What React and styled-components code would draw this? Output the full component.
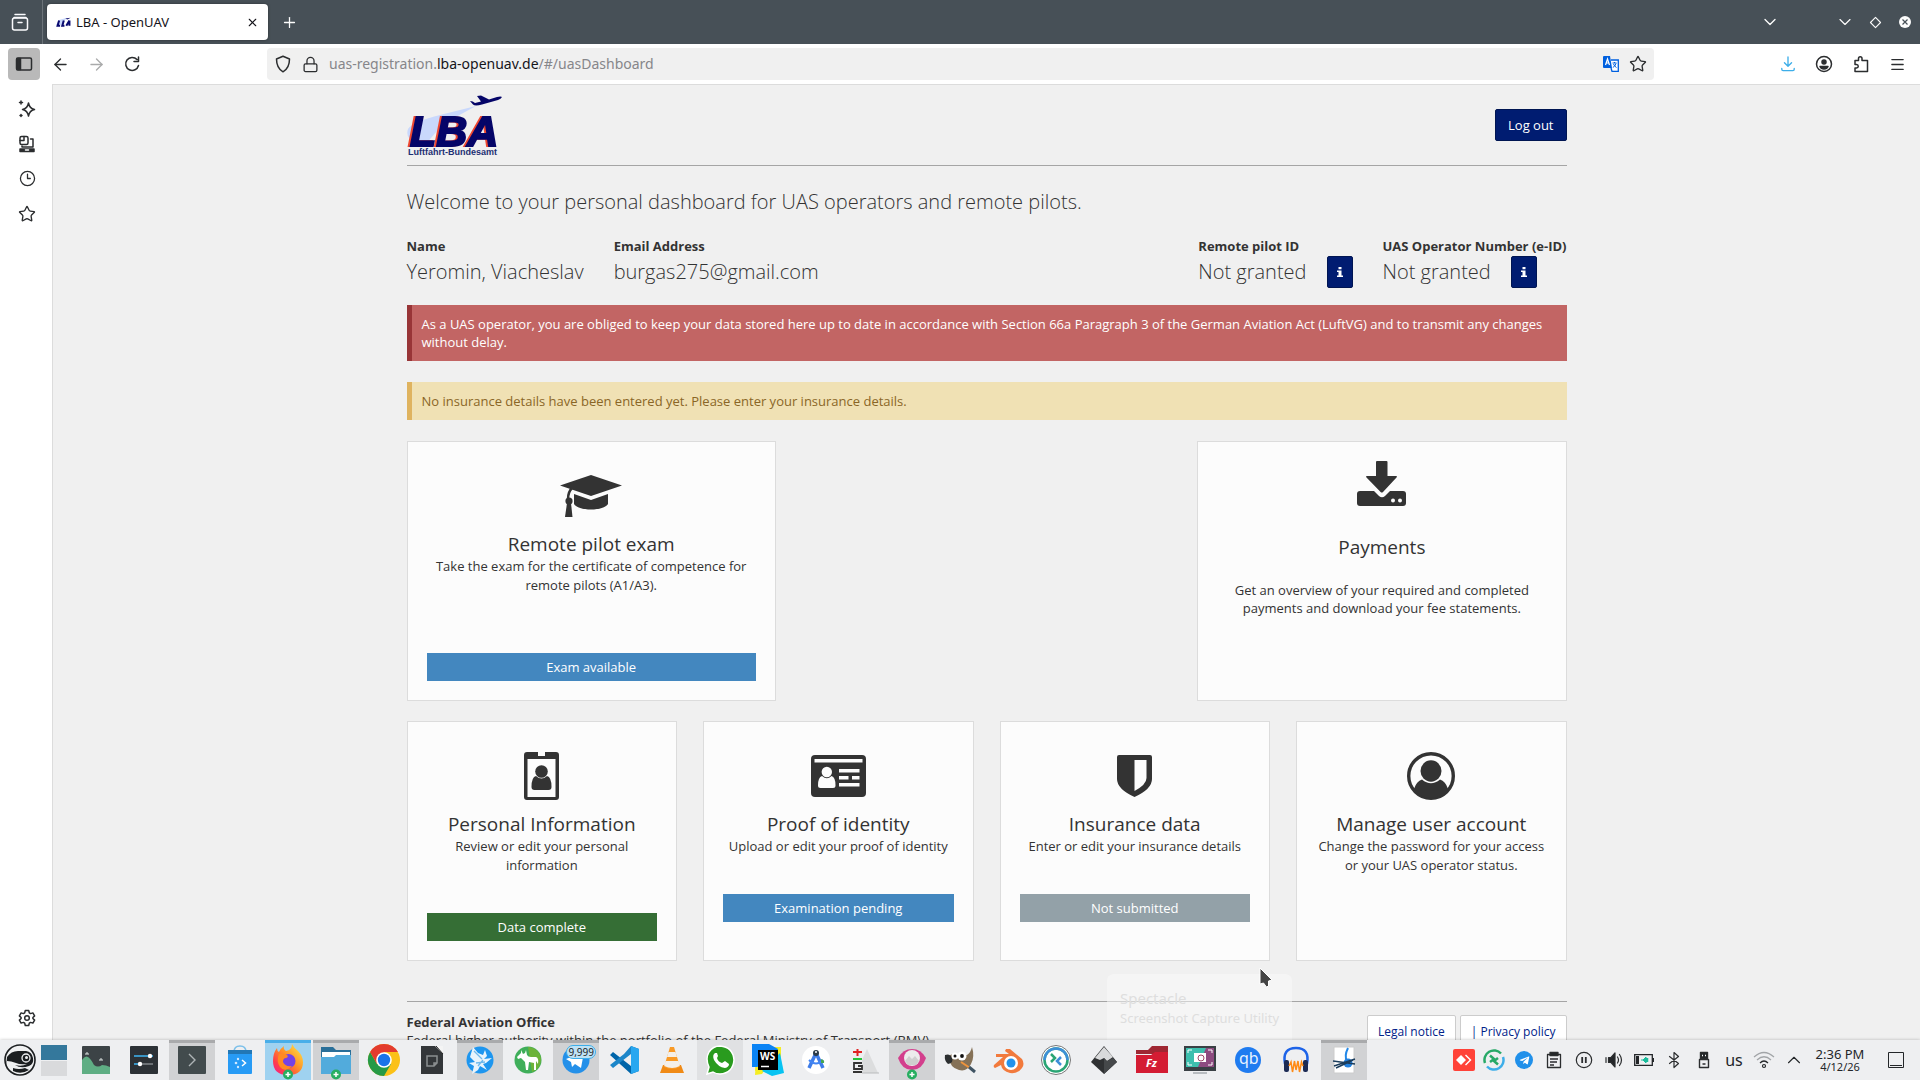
// Library Imports
import React from 'react'
import styled, { createGlobalStyle, css } from 'styled-components'
import {
  ArrowLeft,
  ArrowRight,
  ChevronDown,
  ChevronUp,
  Clock3,
  Lock,
  Menu,
  Plus,
  Star,
  X
} from 'lucide-react'
import { FaTelegramPlane } from 'react-icons/fa'

// Data
const facts = [
  { label: 'Name', value: 'Yeromin, Viacheslav' },
  { label: 'Email Address', value: 'burgas275@gmail.com' }
]

const ids = [
  { label: 'Remote pilot ID', value: 'Not granted' },
  { label: 'UAS Operator Number (e-ID)', value: 'Not granted' }
]

const GlobalStyle = createGlobalStyle`
  * {
    box-sizing: border-box;
  }

  body {
    margin: 0;
    overflow: hidden;
    font-family: 'Open Sans', 'Noto Sans', sans-serif;
    font-size: 13px;
    line-height: 18px;
    color: #333;
  }

  svg {
    display: block;
    flex: none;
  }

  button {
    font: inherit;
    color: inherit;
    border: 0;
    padding: 0;
    background: none;
  }
`

// Card drawings
const CapIcon = () => (
  <svg width="62" height="42" viewBox="0 0 62 42" fill="#333">
    <path d="M0 10.500 31 0l31 10.500L31 21z" />
    <path d="M14 19l17 6 17-6v10c-2 3.500-9 5.500-17 5.500S16 32.500 14 29z" />
    <path d="M12 13c-3 3-4 7-4 11" fill="none" stroke="#333" strokeWidth="2.500" />
    <circle cx="9" cy="26" r="3.600" />
    <path d="M7 28h4l1.500 14h-7.500z" />
  </svg>
)

const DownloadIcon = () => (
  <svg width="49" height="45" viewBox="0 0 49 45" fill="#333">
    <path d="M3 30h43q3 0 3 3v9q0 3-3 3H3q-3 0-3-3v-9q0-3 3-3z" />
    <path d="m16 29 6 6q3 2.500 6 0l6-6z" fill="#fcfcfc" />
    <path d="M19 1q0-1 1-1h9.500q1 0 1 1v14h8.500q2 0 .5 1.500L26 31q-1.200 1-2.400 0L9.500 16.500Q8 15 10 15h9z" />
    <circle cx="36" cy="39.500" r="2" fill="#fcfcfc" />
    <circle cx="43" cy="39.500" r="2" fill="#fcfcfc" />
  </svg>
)

const BadgeIcon = () => (
  <svg width="35" height="48" viewBox="0 0 35 48" fill="#333">
    <path
      fillRule="evenodd"
      d="M3 0h11v4h7V0h11q3 0 3 3v42q0 3-3 3H3q-3 0-3-3V3q0-3 3-3zM3.500 7v38h28V7z"
    />
    <ellipse cx="17.500" cy="19.500" rx="6.300" ry="6.300" />
    <path d="M12 24q5.500 5 11 0 4.500 1 4.500 11 0 3-3 3h-14q-3 0-3-3Q7.500 25 12 24z" />
  </svg>
)

const IdCardIcon = () => (
  <svg width="55" height="42" viewBox="0 0 55 42" fill="#fcfcfc">
    <rect width="55" height="42" rx="4" fill="#333" />
    <path d="M3.500 4h48v3.500h-48zM28 14h20.500v3.500H28zM28 21h9.500v3.500H28zM41 21h7.500v3.500H41zM28 28h20.500v3.500H28z" />
    <circle cx="15.800" cy="17" r="5.200" />
    <path d="M11 21q5 4.500 9.500 0 4 1 4 9.500 0 2.500-2.500 2.500H9.500Q7 33 7 30.500 7 22 11 21z" />
  </svg>
)

const ShieldIcon = () => (
  <svg width="35" height="42" viewBox="0 0 35 42" fill="#333">
    <path
      fillRule="evenodd"
      d="M2 0h31q2 0 2 2v22q0 10-17.500 18Q0 34 0 24V2q0-2 2-2zM17.500 5v31Q29.500 29.500 29.500 23V5z"
    />
  </svg>
)

const AccountIcon = () => (
  <svg width="48" height="48" viewBox="0 0 48 48" fill="#333">
    <circle cx="24" cy="24" r="22.300" fill="none" stroke="#333" strokeWidth="3.400" />
    <ellipse cx="24" cy="19" rx="10.500" ry="10.700" />
    <path d="M15 27.500q9 7.500 18 0 5.500 1.500 8 9.500-7 9-17 9T7 37q2.500-8 8-9.500z" />
  </svg>
)

const LogoLetters = styled.text`
  font: italic 700 43px 'Liberation Sans', sans-serif;
  fill: #050568;
  stroke: #050568;
  stroke-width: 2px;
  filter: drop-shadow(-2px 0 0 #f0472f);
`

const LogoCaption = styled.text`
  font: 700 9px 'Liberation Sans', sans-serif;
  fill: #1d2f73;
`

const LbaLogo = () => (
  <svg width="96" height="62" viewBox="0 0 96 62">
    <path d="M69 11 33 20Q5 27 1 34-2 43 8 47l10 3 18-21z" fill="#c9d8fc" />
    <path
      d="M63 6q3 0 5 2l6-1.500L70 1l4-.5 8 4 8-2.500q4-1 5 0-1 2-4 3L75 9.500q-7 2-9 0z"
      fill="#050568"
    />
    <LogoLetters x="3" y="51">LBA</LogoLetters>
    <LogoCaption x="1" y="60">Luftfahrt-Bundesamt</LogoCaption>
  </svg>
)

const cards = [
  {
    icon: <BadgeIcon />,
    title: 'Personal Information',
    text: 'Review or edit your personal information',
    status: 'Data complete',
    color: '#356e35'
  },
  {
    icon: <IdCardIcon />,
    title: 'Proof of identity',
    text: 'Upload or edit your proof of identity',
    status: 'Examination pending',
    color: '#4387bf'
  },
  {
    icon: <ShieldIcon />,
    title: 'Insurance data',
    text: 'Enter or edit your insurance details',
    status: 'Not submitted',
    color: '#93a1a8'
  },
  {
    icon: <AccountIcon />,
    title: 'Manage user account',
    text: 'Change the password for your access or your UAS operator status.'
  }
]

// Browser drawings
const Line = ({ size = 18, children, ...rest }) => (
  <svg
    width={size}
    height={size}
    viewBox="0 0 18 18"
    fill="none"
    stroke="#2b2d2f"
    strokeWidth="1.500"
    strokeLinecap="round"
    strokeLinejoin="round"
    {...rest}
  >
    {children}
  </svg>
)

const FirefoxViewIcon = () => (
  <Line stroke="#fbfbfe">
    <path d="M4 1.500h10M3 4.500h12" />
    <rect x="1.500" y="5" width="15" height="12" rx="2" />
    <path d="M7 9.500h4" />
  </Line>
)

const SidebarIcon = () => (
  <Line>
    <rect x="1.500" y="3" width="15" height="12" rx="1.500" />
    <path d="M2 3.500h3.500v11H2z" fill="#2b2d2f" />
  </Line>
)

const ReloadIcon = () => (
  <Line>
    <path d="M15.500 10.500A6.500 6.500 0 1 1 14 4.500M15.500 2v4.500H11" />
  </Line>
)

const ShieldLine = () => (
  <Line>
    <path d="M9 1.200 15.500 4c0 5-1.500 10-6.500 12.800C4 14 2.500 9 2.500 4z" />
  </Line>
)

const SparkIcon = () => (
  <Line>
    <path d="M10.500 3q1 5.500 6 6.500-5 1-6 6.500-1-5.500-6-6.500 5-1 6-6.500zM3 1v3M1.500 2.500h3M3 14.500v2M2 15.500h2" />
  </Line>
)

const TabsIcon = () => (
  <Line>
    <rect x="2" y="1.500" width="8" height="8" rx="1.500" />
    <path d="M2 5.500h4v-4M12.500 4H15v8H4V11" />
    <path d="M2 14h14v2.500H2z" fill="#2b2d2f" />
    <path d="M7.500 15h3" stroke="#fff" />
  </Line>
)

const GearIcon = () => (
  <Line>
    <circle cx="9" cy="9" r="2.300" />
    <path d="M7.300 1.500h3.400l.6 2.300 1.300.8 2.300-.7 1.700 3-1.700 1.600v1l1.700 1.600-1.700 3-2.300-.7-1.300.8-.6 2.300H7.300l-.6-2.300-1.300-.8-2.300.7-1.700-3 1.700-1.600v-1L1.400 6.900l1.700-3 2.300.7 1.300-.8z" />
  </Line>
)

const TranslateIcon = () => (
  <svg width="16" height="16" viewBox="0 0 16 16">
    <path d="M8 4h7.300v11.300H9L8 12" fill="#fff" stroke="#0060df" strokeWidth="1.300" />
    <path d="M1 0h6l2 12H1q-1 0-1-1V1q0-1 1-1z" fill="#0060df" />
    <path d="m2.500 9 2-6 2 6M3.300 7h2.500" fill="none" stroke="#fff" strokeWidth="1.200" />
    <path d="M9.500 7h4M11.500 6v1M13 7.500q-1 3-3.200 4M10.500 8q1 2.500 3 3.500" fill="none" stroke="#0060df" />
  </svg>
)

const DownloadLine = () => (
  <Line size={16} stroke="#3daee9">
    <path d="M9 1v10M5 7.500l4 4 4-4M2 14v1q0 1.500 1.500 1.500h11Q16 16.500 16 15v-1" />
  </Line>
)

const ProfileIcon = () => (
  <Line>
    <circle cx="9" cy="9" r="7.500" />
    <circle cx="9" cy="7" r="2" fill="#2b2d2f" />
    <path d="M5 11.500h8q-1 2.500-4 2.500t-4-2.500z" fill="#2b2d2f" />
  </Line>
)

const PuzzleIcon = () => (
  <Line>
    <path d="M3 5.500h3.500V3.500a1.700 1.700 0 0 1 3.500 0v2h5.500V16.500H3v-3.500h1.500a1.700 1.700 0 0 0 0-3.500H3z" />
  </Line>
)

const InfoIcon = () => (
  <svg width="6" height="10" viewBox="0 0 6 10" fill="#fff">
    <path d="M1.500 0h3v2.200h-3zM0 3.500h4.500V8.500H6V10H0V8.500h1.500V5H0z" />
  </svg>
)

const CursorIcon = () => (
  <svg width="14" height="22" viewBox="0 0 14 22">
    <path d="M1 1v16l3.500-1 3 4 2-1v-5l3.500-1z" fill="#444" stroke="#fff" />
  </svg>
)

// Taskbar drawings
const PlusBadge = () => (
  <g>
    <circle cx="16" cy="30.500" r="5" fill="#27ae60" />
    <path d="M16 28v5M13.500 30.500h5" stroke="#fff" strokeWidth="1.500" />
  </g>
)

const art = {
  suse: (
    <>
      <circle cx="16" cy="16" r="15" fill="#eff0f1" stroke="#1b1e20" strokeWidth="1.600" />
      <path d="M3 13q4-6 11-6h8q6 1 7 7 1 6-4 8-8 3-14-1 7 2 12-1-7 1-11-1-5-2-9-2l-1 9Q2 22 3 13z" fill="#1b1e20" />
      <circle cx="22" cy="14" r="4" fill="#1b1e20" stroke="#eff0f1" strokeWidth="1.300" />
      <circle cx="22.500" cy="13.500" r="1.500" fill="#eff0f1" />
      <path d="M9 27q8 4 16-1l-4-2q-6 2-12 0z" fill="#1b1e20" />
    </>
  ),
  monitor: (
    <>
      <rect x="2" y="2" width="28" height="28" rx="1" fill="#3c4346" />
      <path d="M2 16q3-5 6-3t6 8q4 3 8 0 4 0 8 2v7H2z" fill="#5fae84" />
      <path d="M6 11v-2h2v2M20 17v-2h2v2" stroke="#dce3e0" fill="none" />
    </>
  ),
  settings: (
    <>
      <rect x="2" y="2" width="28" height="28" rx="1" fill="#2c3136" />
      <path d="M6 12h19" stroke="#3daee9" strokeWidth="1.600" />
      <path d="M12 20h13" stroke="#7b8186" strokeWidth="1.600" />
      <path d="M6 20h6" stroke="#3daee9" strokeWidth="1.600" />
      <circle cx="22" cy="12" r="2.200" fill="#fff" />
      <circle cx="12" cy="20" r="2.200" fill="#fff" />
    </>
  ),
  terminal: (
    <>
      <rect x="2" y="2" width="28" height="28" rx="1" fill="#424b4d" />
      <path d="m13 10 6 6-6 6" fill="none" stroke="#aeb4b6" strokeWidth="1.400" />
    </>
  ),
  store: (
    <>
      <path d="M10 8q0-6 6-6t6 6" fill="none" stroke="#7cc0ea" strokeWidth="1.500" />
      <path d="M4 6h24v23q0 1-1 1H5q-1 0-1-1z" fill="#279bf5" />
      <path d="M4 6h24v4H4z" fill="#2277b5" />
      <path d="m18 16 3.500 3-3.500 3" fill="none" stroke="#fff" strokeWidth="1.500" />
      <circle cx="12" cy="19" r="1.300" fill="#cfe8ff" />
      <circle cx="14" cy="15" r="1.200" fill="#cfe8ff" />
      <circle cx="14" cy="23" r="1.200" fill="#cfe8ff" />
    </>
  ),
  firefox: (
    <>
      <defs>
        <linearGradient id="fox" x1="1" y1="0" x2="0" y2="1">
          <stop offset="0" stopColor="#fff04f" />
          <stop offset="0.450" stopColor="#ff9326" />
          <stop offset="0.750" stopColor="#ff3d4a" />
          <stop offset="1" stopColor="#f0189c" />
        </linearGradient>
      </defs>
      <path d="M20 0q2 4 6 7 5 5 5 11 0 13-15 13T1 17Q1 9 5 4q0 3 2 4 2-4 5-6-1 3 2 5 6-1 6-7z" fill="url(#fox)" />
      <circle cx="16.500" cy="17" r="7" fill="#7542e5" />
      <path d="M7 10q4-2 8 1 2 2-1 3-3 0-3 4 2 5 9 4-7 7-12 1-4-6-1-13z" fill="#ff8a22" />
      <PlusBadge />
    </>
  ),
  folder: (
    <>
      <path d="M1 3h12l3 3h15v8H1z" fill="#2a6f99" />
      <path d="M2 8h28v6H2z" fill="#fff" />
      <path d="M1 13h13l2-2h15v19H1z" fill="#52abdc" />
      <PlusBadge />
    </>
  ),
  chrome: (
    <>
      <circle cx="16" cy="16" r="16" fill="#fbc117" />
      <path d="M2.100 8A16 16 0 0 0 16 32l7-12H9z" fill="#269a46" />
      <path d="M2.100 8A16 16 0 0 1 29.900 8H16L9 20z" fill="#e33b2e" />
      <circle cx="16" cy="16" r="7.800" fill="#fff" />
      <circle cx="16" cy="16" r="6.200" fill="#1a73e8" />
    </>
  ),
  office: (
    <>
      <path d="M5 2h15l7 8v20H5z" fill="#333639" />
      <path d="m19 2 8 8V2z" fill="#f4f4f4" />
      <path d="m20 2 7 8" stroke="#222" />
      <path d="M11 12h10v7l-3 3h-7zM21 19h-3v3" fill="none" stroke="#8b8e90" strokeWidth="1.500" />
    </>
  ),
  bird: (
    <>
      <circle cx="16" cy="16" r="13.500" fill="#1e96ef" />
      <path d="m9 3 5 6 5 2 2-5 2 6-3 3 8-1-6 5-3 1 4 6-7-4-2 4-6 4 2-8-5-3 6-1-5-5z" fill="#e9f4fc" />
      <path d="m10 7 8 8M12 19l9-1M14 22l5-6" stroke="#6fb9ec" strokeWidth="1.300" />
    </>
  ),
  deer: (
    <>
      <circle cx="16" cy="16" r="13.500" fill="#3fae5a" />
      <path d="M16 3a13 13 0 0 1 13 13 13 13 0 0 1-9 12z" fill="#6db33a" />
      <path d="m9 6 2 4 2-1 1-3 1 5q1 2 4 2h5q3 1 2 7l-2-3v9h-2v-7l-5-1-1 8h-2l-1-8-4-4-3 1-1-2 4-4z" fill="#fff" />
    </>
  ),
  telegram: (
    <>
      <circle cx="16" cy="16" r="13.500" fill="#2490e9" />
      <path d="m6 15 18-7-3 16-6-4-3 3-1-5z" fill="#fff" />
    </>
  ),
  code: (
    <>
      <path d="M23 2 31 5v22l-8 3L2 11l3-3 18 14z" fill="#0065a9" />
      <path d="m23 2-7 8L2 21l3 3 18-14z" fill="#1c86c9" />
      <path d="m23 2 8 3v22l-8 3z" fill="#28a7f0" />
    </>
  ),
  vlc: (
    <>
      <path d="m7 21-3 8h24l-3-8z" fill="#f08a16" />
      <path d="M14 3h4l6 20q-8 4-16 0z" fill="#f99a26" />
      <path d="m12.500 8-1.500 5h10l-1.500-5zM9.500 17l-1.300 5q8 4 15.600 0l-1.300-5z" fill="#f4efe9" />
    </>
  ),
  whatsapp: (
    <>
      <path d="M3 30l2-7Q1 15 5 8 9 2 16 2q13 1 14 14-1 13-14 14-4 0-7-2z" fill="#299b1e" stroke="#fff" strokeWidth="1.500" />
      <path d="M11 9q-3 2-1 7 4 7 11 8 4-1 4-4l-4-3-3 2q-4-1-5-5l1-2-1-3z" fill="#fff" />
    </>
  ),
  webstorm: (
    <>
      <path d="M16 3h13v24H3l1-9z" fill="#f5ed22" />
      <path d="M4 18h14l-8 12-7 1z" fill="#f5ed22" />
      <path d="M0 0h17l9 5-3 10-18 8H0z" fill="#0a83f5" />
      <path d="m28 9 4 20-12 3-10-5z" fill="#07c3f2" />
      <rect x="6" y="6" width="20" height="20" />
      <path d="M9 22.500h8" stroke="#fff" strokeWidth="1.500" />
      <text x="8" y="16" fontSize="10" fontWeight="700" fill="#fff">WS</text>
    </>
  ),
  android: (
    <>
      <circle cx="16" cy="16" r="14" fill="#fff" />
      <path d="m16 9-7 15M16 9l7 15" stroke="#3f7de8" strokeWidth="3.500" />
      <path d="M9 16q7 7 14 0" fill="none" stroke="#4285f4" strokeWidth="2" />
      <circle cx="16" cy="9" r="3" fill="#2b3b48" />
      <circle cx="16" cy="8" r="1" fill="#fff" />
      <path d="M21 15q4 1 3 4h-3z" fill="#48a84f" />
    </>
  ),
  diff: (
    <>
      <path d="m19 5 11 24H14V16z" fill="#dcddde" />
      <path d="M5 8h9M9.500 5v7" stroke="#e02424" strokeWidth="2" />
      <path d="M5 15h9" stroke="#26c43a" strokeWidth="2" />
      <path d="M14 19H6v6h8v-3h-4M5 28h9" fill="none" stroke="#333" strokeWidth="1.800" />
      <path d="M14 29h17" stroke="#b9bbbd" />
    </>
  ),
  gwen: (
    <>
      <path d="M2 14q5-9 14-9t14 9q-4 12-14 12T2 14z" fill="#d33f8d" />
      <circle cx="16" cy="14" r="8" fill="#ececec" />
      <path d="m9 17 4-5 3 3 3-3 4 5-3 4h-8z" fill="#cfcfcf" />
      <PlusBadge />
    </>
  ),
  gimp: (
    <>
      <path d="M4 12q3-2 8-2l11 1q4-3 5-8 3 10-1 17-4 8-12 6Q6 24 4 12z" fill="#857157" />
      <path d="M1 11q5-2 7 3t-4 6q-4-3-3-9z" fill="#2c2f31" />
      <circle cx="11" cy="12" r="3.500" fill="#fff" />
      <circle cx="18" cy="12" r="4.500" fill="#fff" />
      <circle cx="11" cy="12" r="1.500" fill="#111" />
      <circle cx="18" cy="12" r="1.900" fill="#111" />
      <path d="m17 18 9 6" stroke="#f0943b" strokeWidth="2" />
      <path d="m25 23 6 5" stroke="#3f5363" strokeWidth="3" />
    </>
  ),
  blender: (
    <>
      <path d="M14 5h4l12 10q3 5 0 9-4 6-12 5-8-2-9-8l-6 3q-2-1-1-3l9-8H4v-3h13l-4-3z" fill="#f27a3d" />
      <circle cx="19" cy="19" r="7" fill="#fff" />
      <circle cx="19" cy="19" r="4.500" fill="#2292ec" />
    </>
  ),
  remote: (
    <>
      <circle cx="16" cy="16" r="14.500" fill="#fff" stroke="#777" />
      <circle cx="16" cy="16" r="11.500" fill="none" stroke="#2aa574" strokeWidth="2.500" />
      <path d="M4.500 16A11.500 11.500 0 0 1 27.500 16" fill="none" stroke="#3e8fd8" strokeWidth="2.500" />
      <path d="m11 10 4 4-4 4" fill="none" stroke="#2aa574" strokeWidth="2.500" />
      <path d="m21 13-4 4 4 4" fill="none" stroke="#3e8fd8" strokeWidth="2.500" />
    </>
  ),
  inkscape: (
    <>
      <path d="M16 2 3 18l13 12 13-12z" fill="#2f3133" />
      <path d="m16 3-9 11 5 2 4-2 3 3 6-4z" fill="#d9dadb" />
      <path d="m16 14 3 3 6-3 4 4-13 12z" fill="#45484a" />
    </>
  ),
  filezilla: (
    <>
      <path d="M0 6h12l4-4h16v8H0z" fill="#9f2733" />
      <path d="M0 11h15l4-3h13v21H0z" fill="#d41c33" />
      <text x="10" y="23" fontSize="11" fontWeight="700" fontStyle="italic" fill="#fff">Fz</text>
    </>
  ),
  spectacle: (
    <>
      <path d="M0 2h32v25H0z" fill="#3a4045" />
      <path d="M2 4h28v19H2z" fill="#3dbfae" />
      <path d="m14 23 8-19h8v19z" fill="#8d4b80" />
      <path d="M4 9V6h4M28 9V6h-4M4 18v3h4M28 18v3h-4" fill="none" stroke="#fff" />
      <path d="M10 9h12v9H10z" fill="#fff" />
      <circle cx="17" cy="14" r="3" fill="none" stroke="#9d4668" />
      <path d="M9 29h14" stroke="#b8bcc0" strokeWidth="2" />
    </>
  ),
  qb: (
    <>
      <circle cx="16" cy="16" r="13" fill="#1f7bf0" />
      <text x="7" y="20" fontSize="16" fill="#e8f2ff">qb</text>
    </>
  ),
  audacity: (
    <>
      <path d="M5 20Q2 4 16 4t11 16" fill="none" stroke="#1d63e8" strokeWidth="2.500" />
      <rect x="4" y="16" width="5" height="12" rx="2" fill="#1c2b55" />
      <rect x="23" y="16" width="5" height="12" rx="2" fill="#1c2b55" />
      <path d="m9 22 2-4 1.500 10 2-11 1.500 9 2-9 1.500 11 2-10 1.500 4" fill="none" stroke="#ff8a14" strokeWidth="1.500" />
    </>
  ),
  dragonfly: (
    <>
      <path d="M6 3h20v26H6z" fill="#fff" stroke="#ccc" />
      <path d="M20 4q-4 8-1 13" fill="none" stroke="#2388e8" strokeWidth="2" />
      <circle cx="20" cy="19" r="4.500" fill="#2380dd" />
      <path d="m6 22 21-7M5 17l22 3M8 24l17-8" stroke="#1c3d5c" strokeWidth="1.400" />
    </>
  )
}

const tasks = [
  { name: 'System Monitor', art: 'monitor' },
  { name: 'System Settings', art: 'settings' },
  { name: 'Konsole', art: 'terminal', open: true },
  { name: 'Discover', art: 'store' },
  { name: 'Firefox', art: 'firefox', current: true },
  { name: 'Dolphin', art: 'folder', open: true },
  { name: 'Chrome', art: 'chrome' },
  { name: 'LibreOffice', art: 'office' },
  { name: 'Kolibri', art: 'bird', open: true },
  { name: 'Deer', art: 'deer' },
  { name: 'Telegram', art: 'telegram', open: true, count: '9,999' },
  { name: 'VS Code', art: 'code' },
  { name: 'VLC', art: 'vlc' },
  { name: 'WhatsApp', art: 'whatsapp', hover: true },
  { name: 'WebStorm', art: 'webstorm' },
  { name: 'Android Studio', art: 'android' },
  { name: 'Diff', art: 'diff' },
  { name: 'Gwenview', art: 'gwen', open: true },
  { name: 'GIMP', art: 'gimp' },
  { name: 'Blender', art: 'blender' },
  { name: 'Remote desktop', art: 'remote' },
  { name: 'Inkscape', art: 'inkscape' },
  { name: 'FileZilla', art: 'filezilla' },
  { name: 'Spectacle', art: 'spectacle' },
  { name: 'qBittorrent', art: 'qb' },
  { name: 'Audacity', art: 'audacity' },
  { name: 'Dragonfly', art: 'dragonfly', open: true }
]

const Disc = styled.span`
  display: flex;
  align-items: center;
  justify-content: center;
  width: 18px;
  height: 18px;
  border-radius: 50%;
  background: #2090ea;
  color: #fff;
`

const LayoutText = styled.span`
  font-size: 16px;
`

const tray = [
  {
    name: 'AnyDesk',
    draw: (
      <svg width="22" height="22" viewBox="0 0 22 22">
        <rect width="22" height="22" rx="2" fill="#ff4238" />
        <path d="m8 6 5 5-5 5-5-5z" fill="#fff" />
        <path d="m12 6.500 1-1 5.500 5.500-5.500 5.500-1-1 4.500-4.500z" fill="#fff" />
      </svg>
    )
  },
  {
    name: 'Remote',
    draw: (
      <svg width="22" height="22" viewBox="0 0 22 22" fill="none" strokeWidth="2.500">
        <path d="M2 14A9.500 9.500 0 0 1 18 4.500" stroke="#27a967" />
        <path d="M20 8A9.500 9.500 0 0 1 4 17.500" stroke="#3daee9" />
        <path d="M7 6.500 11 10l-4 3M15 9l-4 3 4 3.500" stroke="#27a967" />
      </svg>
    )
  },
  {
    name: 'Telegram',
    draw: (
      <Disc>
        <FaTelegramPlane size={11} />
      </Disc>
    )
  },
  {
    name: 'Clipboard',
    draw: (
      <Line strokeWidth="1.300" strokeLinecap="butt">
        <path d="M2.500 3.500h13v13h-13z" />
        <path d="M5 1.500h8v3H5z" fill="#232629" />
        <path d="M5 8h8M5 11h7M5 14h4" />
      </Line>
    )
  },
  {
    name: 'Media',
    draw: (
      <Line strokeWidth="1.200">
        <circle cx="9" cy="9" r="7.700" />
        <path d="M7.200 6v6M10.800 6v6" strokeWidth="1.800" strokeLinecap="butt" />
      </Line>
    )
  },
  {
    name: 'Volume',
    draw: (
      <Line strokeWidth="1.200">
        <path d="M1 6.500v5M3.500 6.500H6l4-4.500v14l-4-4.500H3.500z" fill="#232629" />
        <path d="M12.500 6q2 3 0 6M14.500 3.500q4 5.500 0 11" />
      </Line>
    )
  },
  {
    name: 'Battery',
    draw: (
      <svg width="20" height="12" viewBox="0 0 20 12">
        <path d="M.7.700h17.600v10.600H.7z" fill="none" stroke="#232629" strokeWidth="1.300" />
        <path d="M2 2h3v8H2zM18 4h2v4h-2z" fill="#232629" />
        <path d="M7 6h2l3-3v1.500h2v1h-2v1h2v1h-2V9L9 6" fill="#1abc9c" stroke="#1abc9c" />
      </svg>
    )
  },
  {
    name: 'Bluetooth',
    draw: (
      <Line strokeWidth="1.200">
        <path d="m4.500 5.500 9 7L9 16.500v-15l4.500 4-9 7" />
      </Line>
    )
  },
  {
    name: 'USB device',
    draw: (
      <Line strokeWidth="1.400" strokeLinecap="butt">
        <path d="M5.500 1.500h7v6h-7z" fill="#232629" />
        <path d="M4.500 8.500h9v8h-9zM7.500 13h3" />
        <path d="M7 4.500h1M10 4.500h1" stroke="#fff" />
      </Line>
    )
  },
  { name: 'Keyboard layout', draw: <LayoutText>us</LayoutText> },
  {
    name: 'Network',
    draw: (
      <svg width="22" height="18" viewBox="0 0 22 18" fill="none" strokeWidth="1.200">
        <path d="M1 6q10-9 20 0M4 9q7-6.500 14 0" stroke="#a2a5a8" />
        <path d="M7 12q4-4 8 0" stroke="#232629" />
        <circle cx="11" cy="15" r="1.500" stroke="#232629" />
      </svg>
    )
  },
  { name: 'Show hidden icons', draw: <ChevronUp size={22} strokeWidth={1.2} /> }
]

const StatusCard = ({ icon, title, text, status, color, wide }) => (
  <Card>
    <IconArea>{icon}</IconArea>
    <CardTitle>{title}</CardTitle>
    <CardText>{text}</CardText>
    {status && (
      <Status $color={color} $wide={wide}>
        {status}
      </Status>
    )}
  </Card>
)

const Dashboard = () => (
  <Container>
    <SiteHeader>
      <LbaLogo />
      <LogoutButton type="button">Log out</LogoutButton>
    </SiteHeader>
    <Heading>Welcome to your personal dashboard for UAS operators and remote pilots.</Heading>
    <Facts>
      {facts.map(fact => (
        <div key={fact.label}>
          <FactLabel>{fact.label}</FactLabel>
          <FactValue>{fact.value}</FactValue>
        </div>
      ))}
      <Spacer />
      {ids.map(fact => (
        <div key={fact.label}>
          <FactLabel>{fact.label}</FactLabel>
          <FactValue>
            {fact.value}
            <InfoButton type="button" aria-label={`About ${fact.label}`}>
              <InfoIcon />
            </InfoButton>
          </FactValue>
        </div>
      ))}
    </Facts>
    <Alert $danger>
      As a UAS operator, you are obliged to keep your data stored here up to date in accordance with
      Section 66a Paragraph 3 of the German Aviation Act (LuftVG) and to transmit any changes without
      delay.
    </Alert>
    <Alert>No insurance details have been entered yet. Please enter your insurance details.</Alert>
    <CardGrid $columns={3}>
      <StatusCard
        wide
        icon={<CapIcon />}
        title="Remote pilot exam"
        text="Take the exam for the certificate of competence for remote pilots (A1/A3)."
        status="Exam available"
        color="#4387bf"
      />
      <span />
      <Card>
        <DownloadIcon />
        <PaymentsTitle>Payments</PaymentsTitle>
        <PaymentsText>
          Get an overview of your required and completed payments and download your fee statements.
        </PaymentsText>
      </Card>
    </CardGrid>
    <CardGrid $columns={4}>
      {cards.map(card => (
        <StatusCard key={card.title} {...card} />
      ))}
    </CardGrid>
    <Footer>
      <div>
        <strong>Federal Aviation Office</strong>
        <div>Federal higher authority within the portfolio of the Federal Ministry of Transport (BMV)</div>
      </div>
      <FooterLinks>
        <FooterLink href="#legal">Legal notice</FooterLink>
        <FooterLink href="#privacy">| Privacy policy</FooterLink>
      </FooterLinks>
    </Footer>
  </Container>
)

export default function App() {
  return (
    <Desktop>
      <GlobalStyle />
      <TabBar>
        <ViewButton type="button" aria-label="Firefox View">
          <FirefoxViewIcon />
        </ViewButton>
        <Tab>
          <svg width="15" height="11" viewBox="0 0 96 62" aria-hidden="true">
            <path d="M70 0 20 15 0 48h30z" fill="#c9d8fc" />
            <path
              d="m20 18-10 34h16M50 18 40 52h14M86 18v34M86 18 66 52"
              fill="none"
              stroke="#0a0a70"
              strokeWidth="13"
            />
            <path d="m60 6 34-6-22 12z" fill="#050568" />
          </svg>
          <TabTitle>LBA - OpenUAV</TabTitle>
          <button type="button" aria-label="Close tab">
            <X size={13} strokeWidth={2} />
          </button>
        </Tab>
        <NewTab type="button" aria-label="New tab">
          <Plus size={17} strokeWidth={1.8} />
        </NewTab>
        <Spacer />
        <WindowButton type="button" aria-label="List all tabs" $gap>
          <ChevronDown size={20} strokeWidth={1.6} />
        </WindowButton>
        <WindowButton type="button" aria-label="Minimize">
          <ChevronDown size={20} strokeWidth={1.4} />
        </WindowButton>
        <WindowButton type="button" aria-label="Maximize">
          <Line size={13} stroke="#fcfcfc">
            <path d="m9 2 7 7-7 7-7-7z" />
          </Line>
        </WindowButton>
        <WindowButton type="button" aria-label="Close window">
          <svg width="12" height="12" viewBox="0 0 12 12">
            <circle cx="6" cy="6" r="6" fill="#fcfcfc" />
            <path d="m3.500 3.500 5 5M8.500 3.500l-5 5" stroke="#475057" strokeWidth="1.200" />
          </svg>
        </WindowButton>
      </TabBar>
      <NavBar>
        <NavButton type="button" aria-label="Sidebar" $active>
          <SidebarIcon />
        </NavButton>
        <NavButton type="button" aria-label="Back">
          <ArrowLeft size={19} strokeWidth={1.7} />
        </NavButton>
        <NavButton type="button" aria-label="Forward" $muted>
          <ArrowRight size={19} strokeWidth={1.7} />
        </NavButton>
        <NavButton type="button" aria-label="Reload">
          <ReloadIcon />
        </NavButton>
        <UrlBar>
          <ShieldLine />
          <Lock size={17} strokeWidth={1.8} />
          <UrlText>
            uas-registration.<b>lba-openuav.de</b>/#/uasDashboard
            <UrlInput aria-label="Search or enter address" />
          </UrlText>
          <TranslateIcon />
          <Star size={18} strokeWidth={1.8} />
        </UrlBar>
        <Tools>
          <button type="button" aria-label="Downloads">
            <DownloadLine />
          </button>
          <button type="button" aria-label="Account">
            <ProfileIcon />
          </button>
          <button type="button" aria-label="Extensions">
            <PuzzleIcon />
          </button>
          <button type="button" aria-label="Menu">
            <Menu size={17} strokeWidth={1.8} />
          </button>
        </Tools>
      </NavBar>
      <Main>
        <Sidebar>
          <SideButton type="button" aria-label="Chatbot">
            <SparkIcon />
          </SideButton>
          <SideButton type="button" aria-label="Synced tabs">
            <TabsIcon />
          </SideButton>
          <SideButton type="button" aria-label="History">
            <Clock3 size={17} strokeWidth={1.8} />
          </SideButton>
          <SideButton type="button" aria-label="Bookmarks">
            <Star size={18} strokeWidth={1.8} />
          </SideButton>
          <Spacer />
          <SideButton type="button" aria-label="Customize sidebar">
            <GearIcon />
          </SideButton>
        </Sidebar>
        <Page>
          <Dashboard />
        </Page>
      </Main>
      <Tooltip>
        <TooltipTitle>Spectacle</TooltipTitle>
        Screenshot Capture Utility
      </Tooltip>
      <Pointer>
        <CursorIcon />
      </Pointer>
      <Taskbar>
        <StartButton type="button" aria-label="Application launcher">
          <svg width="32" height="32" viewBox="0 0 32 32">{art.suse}</svg>
        </StartButton>
        <Pager>
          <Workspace type="button" aria-label="Desktop 1" $active />
          <Workspace type="button" aria-label="Desktop 2" />
        </Pager>
        <Tasks>
          {tasks.map(task => (
            <Task
              key={task.name}
              type="button"
              aria-label={task.name}
              $open={task.open}
              $current={task.current}
              $hover={task.hover}
            >
              <svg width="32" height="32" viewBox="0 0 32 32" overflow="visible">
                {art[task.art]}
              </svg>
              {task.count && <Count>{task.count}</Count>}
            </Task>
          ))}
        </Tasks>
        <Spacer />
        {tray.map(item => (
          <TrayItem key={item.name} type="button" aria-label={item.name}>
            {item.draw}
          </TrayItem>
        ))}
        <Clock>
          <Time>2:36 PM</Time>
          <DateLine>4/12/26</DateLine>
        </Clock>
        <ShowDesktop type="button" aria-label="Show desktop">
          <svg width="16" height="16" viewBox="0 0 16 16" fill="none" stroke="#232629">
            <path d="M.5.500h15v15H.5zM2 13.500h12" />
          </svg>
        </ShowDesktop>
      </Taskbar>
    </Desktop>
  )
}

const Desktop = styled.div`
  display: flex;
  flex-direction: column;
  height: 100vh;
  background: #fff;
`

const Spacer = styled.div`
  flex: 1;
`

const TabBar = styled.header`
  display: flex;
  align-items: center;
  flex: none;
  height: 44px;
  background: #475057;
  color: #fcfcfc;
  font-family: 'Noto Sans', sans-serif;
`

const ViewButton = styled.button`
  display: flex;
  align-items: center;
  align-self: stretch;
  width: 43px;
  padding-left: 11px;
  border-right: 1px solid #6c7379;
`

const Tab = styled.div`
  display: flex;
  align-items: center;
  gap: 5px;
  width: 221px;
  height: 36px;
  margin-left: 4px;
  padding: 0 9px;
  border-radius: 4px;
  background: #fff;
  color: #15141a;
  box-shadow: 0 0 3px rgba(0, 0, 0, 0.4);
`

const TabTitle = styled.span`
  flex: 1;
`

const NewTab = styled.button`
  margin-left: 13px;
`

const WindowButton = styled.button`
  display: flex;
  justify-content: center;
  width: 30px;
  margin-right: ${({ $gap }) => ($gap ? '45px' : '0')};
`

const NavBar = styled.nav`
  display: flex;
  align-items: center;
  flex: none;
  height: 40px;
  padding: 0 14px 0 8px;
  gap: 4px;
  color: #2b2d2f;
`

const NavButton = styled.button`
  display: flex;
  align-items: center;
  justify-content: center;
  width: 32px;
  height: 32px;
  border-radius: 4px;
  background: ${({ $active }) => ($active ? '#b9b9b9' : 'none')};
  opacity: ${({ $muted }) => ($muted ? 0.4 : 1)};
`

const UrlBar = styled.div`
  display: flex;
  align-items: center;
  flex: 1;
  gap: 10px;
  height: 32px;
  margin: 0 122px 0 115px;
  padding: 0 7px;
  border-radius: 4px;
  background: #f0f0f0;
`

const UrlText = styled.label`
  position: relative;
  flex: 1;
  font: 14px/20px 'Noto Sans', sans-serif;
  color: #86868a;

  b {
    font-weight: 400;
    color: #15141a;
  }
`

const UrlInput = styled.input`
  position: absolute;
  inset: 0;
  width: 100%;
  border: 0;
  outline: 0;
  background: transparent;
`

const Tools = styled.div`
  display: flex;
  align-items: center;
  gap: 19px;
`

const Main = styled.div`
  display: flex;
  flex: 1;
  min-height: 0;
`

const Sidebar = styled.aside`
  display: flex;
  flex-direction: column;
  align-items: center;
  flex: none;
  width: 52px;
  padding: 7px 0 5px 2px;
  color: #2b2d2f;
`

const SideButton = styled.button`
  display: flex;
  align-items: center;
  justify-content: center;
  width: 36px;
  height: 35px;
`

const Page = styled.main`
  flex: 1;
  overflow: hidden;
  border-top: 1px solid #dcdcdc;
  border-left: 1px solid #dcdcdc;
  background: #f0f0f0;
`

const Container = styled.div`
  width: 100%;
  max-width: 1200px;
  margin: 0 auto;
  padding: 0 20px;
`

const SiteHeader = styled.header`
  display: flex;
  align-items: center;
  justify-content: space-between;
  height: 81px;
  padding-top: 2px;
  border-bottom: 1px solid #a5a5a5;
`

const navyButton = css`
  border: 1px solid #001552;
  border-radius: 2px;
  background: #001c71;
  color: #fff;
`

const LogoutButton = styled.button`
  ${navyButton}
  height: 32px;
  padding: 0 12px;
  margin-bottom: 3px;
`

const Heading = styled.h1`
  margin: 21px 0 20px;
  font-size: 20px;
  line-height: 30px;
  font-weight: 300;
`

const Facts = styled.section`
  display: flex;
  gap: 30px;
  margin-bottom: 17px;
`

const FactLabel = styled.div`
  height: 19px;
  font-weight: 700;
`

const FactValue = styled.div`
  display: flex;
  align-items: center;
  gap: 20px;
  font-size: 20px;
  line-height: 32px;
  font-weight: 300;
`

const InfoButton = styled.button`
  ${navyButton}
  display: flex;
  align-items: center;
  justify-content: center;
  width: 26px;
  height: 32px;
`

const Alert = styled.p`
  margin: 0 0 21px;
  padding: 10px;
  border-left: 5px solid ${({ $danger }) => ($danger ? '#983537' : '#dfb35f')};
  background: ${({ $danger }) => ($danger ? '#c26564' : '#f0e1b4')};
  color: ${({ $danger }) => ($danger ? '#fff' : '#8a6626')};
`

const CardGrid = styled.section`
  display: grid;
  grid-template-columns: repeat(${({ $columns }) => $columns}, 1fr);
  gap: 26px;
  margin-bottom: 20px;
`

const Card = styled.article`
  display: flex;
  flex-direction: column;
  align-items: center;
  padding: 19px;
  border: 1px solid #dcdcdc;
  background: #fcfcfc;
  text-align: center;
`

const IconArea = styled.div`
  display: flex;
  align-items: center;
  height: 70px;
`

const CardTitle = styled.h2`
  margin: 0;
  font-size: 19px;
  line-height: 26px;
  font-weight: 400;
`

const CardText = styled.p`
  margin: 0;
  line-height: 19px;
`

const PaymentsTitle = styled(CardTitle)`
  margin: 28px 0 21px;
`

const PaymentsText = styled(CardText)`
  padding: 0 10px;
  line-height: 18px;
`

const Status = styled.div`
  align-self: stretch;
  margin-top: ${({ $wide }) => ($wide ? '58px' : '38px')};
  background: ${({ $color }) => $color};
  color: #fff;
  line-height: 28px;
`

const Footer = styled.footer`
  display: flex;
  justify-content: space-between;
  margin-top: 40px;
  padding-top: 11px;
  border-top: 1px solid #a5a5a5;
`

const FooterLinks = styled.div`
  display: flex;
  align-items: flex-start;
  gap: 4px;
`

const FooterLink = styled.a`
  margin-top: 2px;
  padding: 6px 10px;
  border: 1px solid #ccc;
  border-radius: 2px;
  background: #fff;
  color: #002288;
  font-size: 12px;
  line-height: 20px;
  text-decoration: none;
`

const Tooltip = styled.div`
  position: absolute;
  right: 628px;
  bottom: 40px;
  width: 185px;
  height: 66px;
  padding: 14px 13px;
  border-radius: 6px 6px 0 0;
  background: rgba(250, 250, 250, 0.5);
  color: #dedede;
  font: 13px/20px 'Noto Sans', sans-serif;
  white-space: nowrap;
`

const TooltipTitle = styled.div`
  font-size: 15px;
`

const Pointer = styled.div`
  position: absolute;
  right: 647px;
  bottom: 91px;
`

const Taskbar = styled.footer`
  display: flex;
  align-items: center;
  flex: none;
  height: 40px;
  padding-right: 8px;
  background: #eeeff1;
  color: #232629;
  font-family: 'Noto Sans', sans-serif;
  box-shadow: 0 0 3px rgba(0, 0, 0, 0.25);
  z-index: 1;
`

const StartButton = styled.button`
  width: 41px;
  padding-left: 4px;
`

const Pager = styled.div`
  display: grid;
  gap: 1px;
  width: 26px;
`

const Workspace = styled.button`
  height: 15px;
  background: ${({ $active }) => ($active ? '#34789c' : '#d9dadc')};
`

const Tasks = styled.div`
  display: flex;
  align-self: stretch;
  gap: 2px;
  margin-left: 6px;
`

const Task = styled.button`
  position: relative;
  display: flex;
  align-items: center;
  justify-content: center;
  width: 46px;
  height: 40px;

  ${({ $open }) =>
    $open &&
    css`
      background: #d1d2d4;
      box-shadow: inset 0 3px #a9aaac;
    `}

  ${({ $current }) =>
    $current &&
    css`
      background: #9fd2f0;
      box-shadow: inset 0 3px #48aee9;
    `}

  ${({ $hover }) =>
    $hover &&
    css`
      background: #e0e1e3;
    `}
`

const Count = styled.span`
  position: absolute;
  top: 5px;
  right: 3px;
  padding: 0 1px;
  border: 1px solid #3daee9;
  border-radius: 7px;
  background: #bfe2f5;
  font-size: 10px;
  line-height: 12px;
`

const TrayItem = styled.button`
  display: flex;
  align-items: center;
  justify-content: center;
  width: 30px;
  height: 40px;
`

const Clock = styled.time`
  width: 62px;
  text-align: center;
`

const Time = styled.div`
  font-size: 13px;
  line-height: 14px;
`

const DateLine = styled.div`
  font-size: 11px;
  line-height: 12px;
`

const ShowDesktop = styled.button`
  display: flex;
  justify-content: center;
  width: 32px;
  margin-left: 9px;
`
